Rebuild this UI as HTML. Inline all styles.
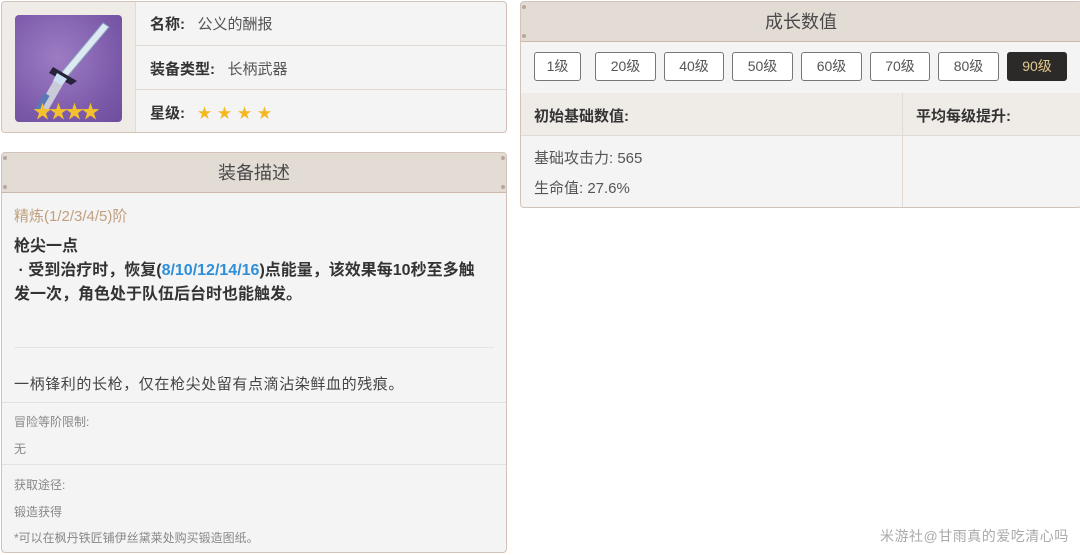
<!DOCTYPE html>
<html><head><meta charset="utf-8"><style>
*{box-sizing:border-box;margin:0;padding:0}
body{width:1080px;height:555px;background:#fff;font-family:"Liberation Sans","Noto Sans CJK SC",sans-serif;position:relative;overflow:hidden;color:#333}
.abs{position:absolute}
.card{position:absolute;border:1px solid #d2c2b8;border-radius:4px;background:#f4f4f4;overflow:hidden}
.hdr{position:absolute;left:0;right:0;top:0;background:#e3dcd5;border-bottom:1px solid #cbb8aa;text-align:center;color:#4a4a4a;font-size:18px}
.dot{position:absolute;width:4px;height:4px;border-radius:2px;background:#b8a69a}
.btn{position:absolute;top:50px;height:29px;border:1px solid #777;border-radius:3px;background:#fff;font-size:14px;color:#555;text-align:center;line-height:27px}
</style></head><body>
<div class="card" style="left:1px;top:1px;width:506px;height:132px">
  <div class="abs" style="left:0;top:0;width:134px;height:130px;background:#efebe6;border-right:1px solid #e2dad3"></div>
  <div class="abs" style="left:13px;top:13px;width:107px;height:107px;border-radius:4px;background:radial-gradient(circle at 40% 40%,#9d7cc4,#7a58a8 70%,#6e4e9c)">
    <svg width="107" height="107" viewBox="0 0 107 107">
      <polygon points="88,8 94,12 52,62 46,58" fill="#dfe9f2" stroke="#8aa4c0" stroke-width="1"/>
      <path d="M38,52 L62,66 L56,70 L34,58Z" fill="#26233a"/>
      <path d="M42,58 L52,64 L46,72 L38,66Z" fill="#cde0f2"/>
      <rect x="30" y="66" width="10" height="32" fill="#c9ccd8" transform="rotate(30 35 82)"/>
      <rect x="24" y="78" width="6" height="20" fill="#5a78b8" transform="rotate(30 27 88)"/>
    </svg>
    <div class="abs" style="left:18px;top:88px;font-size:19px;color:#f5c12a;letter-spacing:-3px;line-height:19px">★★★★</div>
  </div>
  <div class="abs" style="left:134px;top:43px;right:0;height:1px;background:#e2dad3"></div>
  <div class="abs" style="left:134px;top:87px;right:0;height:1px;background:#e2dad3"></div>
  <div class="abs" style="left:148px;top:11px;font-size:15px"><b>名称:</b>&nbsp;&nbsp;&nbsp;<span style="color:#555">公义的酬报</span></div>
  <div class="abs" style="left:148px;top:56px;font-size:15px"><b>装备类型:</b>&nbsp;&nbsp;&nbsp;<span style="color:#555">长柄武器</span></div>
  <div class="abs" style="left:148px;top:100px;font-size:15px"><b>星级:</b>&nbsp;&nbsp;&nbsp;<span style="color:#f5b820;font-size:14px;letter-spacing:6px">★★★★</span></div>
</div>
<div class="card" style="left:1px;top:152px;width:506px;height:401px">
  <div class="hdr" style="height:40px;line-height:40px">装备描述</div>
  <div class="dot" style="left:1px;top:3px"></div><div class="dot" style="left:1px;top:32px"></div>
  <div class="dot" style="right:1px;top:3px"></div><div class="dot" style="right:1px;top:32px"></div>
  <div class="abs" style="left:12px;top:52px;font-size:15px;color:#c0a080">精炼(1/2/3/4/5)阶</div>
  <div class="abs" style="left:12px;top:82px;width:468px;font-size:16px;font-weight:bold;line-height:24px;color:#333">枪尖一点<br>&nbsp;· 受到治疗时，恢复(<span style="color:#2e8fd8">8/10/12/14/16</span>)点能量，该效果每10秒至多触发一次，角色处于队伍后台时也能触发。</div>
  <div class="abs" style="left:12px;top:194px;width:480px;height:1px;background:#e4e4e4"></div>
  <div class="abs" style="left:12px;top:220px;font-size:15px;letter-spacing:0.6px;color:#444">一柄锋利的长枪，仅在枪尖处留有点滴沾染鲜血的残痕。</div>
  <div class="abs" style="left:0;top:249px;right:0;height:1px;background:#e2e2e2"></div>
  <div class="abs" style="left:12px;top:260px;font-size:12px;color:#888">冒险等阶限制:</div>
  <div class="abs" style="left:12px;top:287px;font-size:12px;color:#888">无</div>
  <div class="abs" style="left:0;top:311px;right:0;height:1px;background:#e2e2e2"></div>
  <div class="abs" style="left:12px;top:323px;font-size:12px;color:#888">获取途径:</div>
  <div class="abs" style="left:12px;top:350px;font-size:12px;color:#888">锻造获得</div>
  <div class="abs" style="left:12px;top:376px;font-size:12px;color:#888">*可以在枫丹铁匠铺伊丝黛莱处购买锻造图纸。</div>
</div>
<div class="card" style="left:520px;top:1px;width:562px;height:207px">
  <div class="hdr" style="height:40px;line-height:40px">成长数值</div>
  <div class="dot" style="left:1px;top:3px"></div><div class="dot" style="left:1px;top:32px"></div>
  <div class="abs" style="left:0;top:40px;right:0;height:51px;background:#f4f4f4"></div>
  <div class="btn" style="left:13px;width:47px">1级</div>
  <div class="btn" style="left:74px;width:61px">20级</div>
  <div class="btn" style="left:143px;width:60px">40级</div>
  <div class="btn" style="left:211px;width:61px">50级</div>
  <div class="btn" style="left:280px;width:61px">60级</div>
  <div class="btn" style="left:349px;width:60px">70级</div>
  <div class="btn" style="left:417px;width:61px">80级</div>
  <div class="btn" style="left:486px;width:60px;background:#2b2a29;border-color:#2b2a29;color:#e3c890">90级</div>
  <div class="abs" style="left:0;top:91px;right:0;height:43px;background:#efebe7;border-bottom:1px solid #e2dad3"></div>
  <div class="abs" style="left:381px;top:91px;width:1px;height:116px;background:#e2dad3"></div>
  <div class="abs" style="left:13px;top:103px;font-size:15px;font-weight:bold">初始基础数值:</div>
  <div class="abs" style="left:395px;top:103px;font-size:15px;font-weight:bold">平均每级提升:</div>
  <div class="abs" style="left:13px;top:145px;font-size:15px;color:#555">基础攻击力: 565</div>
  <div class="abs" style="left:13px;top:175px;font-size:15px;color:#555">生命值: 27.6%</div>
</div>
<div class="abs" style="left:880px;top:526px;font-size:14px;letter-spacing:0.5px;color:#aaa">米游社@甘雨真的爱吃清心吗</div>
</body></html>
